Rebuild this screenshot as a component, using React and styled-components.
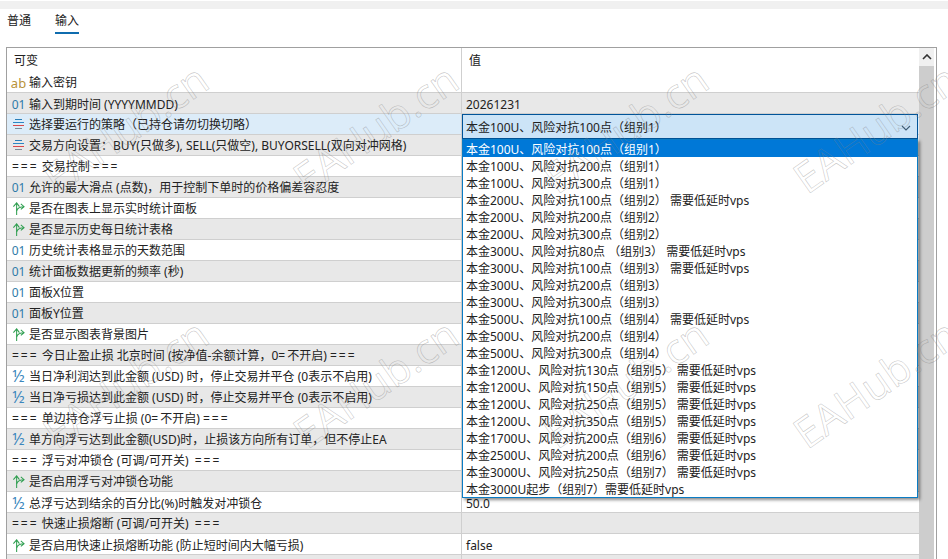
import React from "react";
import styled, { createGlobalStyle } from "styled-components";

const GlobalStyle = createGlobalStyle`
  html, body {
    margin: 0;
    padding: 0;
    height: 100%;
    overflow: hidden;
    background: #fff;
  }
  body {
    font-family: "Noto Sans", "Noto Sans CJK SC", sans-serif;
    font-size: 12px;
    color: #222;
  }
`;

const Page = styled.div`
  position: relative;
  width: 948px;
  height: 559px;
  overflow: hidden;
  background: #fff;
`;

const TopStrip = styled.div`
  height: 8px;
  margin-top: 1px;
  background: #f0f0f0;
`;

const Tabs = styled.div`
  display: flex;
  gap: 24px;
  height: 38px;
  padding: 0 0 0 7px;
  box-sizing: border-box;
`;

const Tab = styled.div`
  height: 21px;
  padding-top: 2px;
  line-height: 20px;
  border-bottom: 2px solid ${(p) => (p.$active ? "#0f6cae" : "transparent")};
`;

const Frame = styled.div`
  display: flex;
  width: 931px;
  height: 512px;
  margin-left: 6px;
  border: 1px solid #a0a0a0;
  border-bottom: 0;
  box-sizing: border-box;
`;

const Table = styled.div`
  flex: 1;
  min-width: 0;
`;

const Row = styled.div`
  display: grid;
  grid-template-columns: 455px 1fr;
  height: 21px;
  box-sizing: border-box;
  border-bottom: 1px solid #cfcfcf;
  background: ${(p) => (p.$selected ? "#dcecf9" : p.$shade ? "#e8e8e8" : "#fff")};
  line-height: 20px;
`;

const HeadRow = styled(Row)`
  height: 24px;
  border-bottom: 0;
  background: #fff;
  line-height: 25px;
`;

const NameCell = styled.div`
  display: flex;
  align-items: center;
  padding-left: ${(p) => (p.$head ? "7px" : "5px")};
  border-right: 1px solid #cfcfcf;
  white-space: pre;
  overflow: hidden;
`;

const NameText = styled.span`
  padding-top: 2px;
`;

const ValueCell = styled.div`
  position: relative;
  padding-left: ${(p) => (p.$head ? "7px" : "4px")};
  padding-top: ${(p) => (p.$head ? "0" : "2px")};
  white-space: nowrap;
`;

const Icon = styled.span`
  display: inline-flex;
  align-items: center;
  justify-content: center;
  flex: none;
  width: 13px;
  margin-right: 4px;
  padding-top: ${(p) => p.$shift || 0}px;
  font-size: ${(p) => p.$size || 12}px;
  color: ${(p) => p.$color};
`;

const Equals = styled.span`
  letter-spacing: 2px;
`;

const Combo = styled.div`
  position: absolute;
  top: 0;
  left: 0;
  right: 1px;
  height: 25px;
  display: flex;
  align-items: center;
  justify-content: space-between;
  padding: 2px 6px 0 3px;
  box-sizing: border-box;
  background: #cce4f7;
  border: 1px solid #005499;
`;

const List = styled.div`
  position: absolute;
  z-index: 2;
  top: 25px;
  left: 0;
  right: 1px;
  box-sizing: border-box;
  background: #fff;
  border: 1px solid #0a7cc4;
  box-shadow: 2px 2px 3px rgba(0, 0, 0, 0.45);
`;

const Option = styled.div`
  height: 17px;
  line-height: 19px;
  padding-left: 3px;
  color: ${(p) => (p.$active ? "#fff" : "#222")};
  background: ${(p) => (p.$active ? "#0078d7" : "transparent")};
`;

const Scrollbar = styled.div`
  flex: none;
  width: 17px;
  padding-right: 2px;
  box-sizing: border-box;
  display: flex;
  flex-direction: column;
  background: #fff;
`;

const ScrollButton = styled.div`
  height: 18px;
  display: flex;
  align-items: center;
  justify-content: center;
  background: #f0f0f0;
`;

const ScrollThumb = styled.div`
  flex: 1;
  background: #cdcdcd;
`;

const Watermarks = styled.div`
  position: absolute;
  z-index: 5;
  inset: 0;
  display: grid;
  grid-template-columns: repeat(4, 250px);
  grid-auto-rows: 255px;
  pointer-events: none;
`;

const Mark = styled.div`
  display: flex;
  align-items: center;
  justify-content: center;
  font-family: "Open Sans", sans-serif;
  font-size: 42px;
  color: transparent;
  -webkit-text-stroke: 0.6px rgba(130, 130, 130, 0.45);
  transform: rotate(-35deg);
  white-space: nowrap;
`;

const EnumIcon = () => (
  <svg width="13" height="12" viewBox="0 0 13 12" shapeRendering="crispEdges">
    <path d="M3 1.5h7" stroke="#2b7fb8" />
    <path d="M1 4.5h11" stroke="#2b86c5" />
    <path d="M1 7.5h11" stroke="#d8484a" />
    <path d="M3 10.5h7" stroke="#7d8a94" />
  </svg>
);

const BoolIcon = () => (
  <svg width="14" height="15" viewBox="0 0 14 15" fill="none" stroke="#2e9e4f" strokeWidth="1.1">
    <path d="M5 14.5V2M1.5 5.5L5 1.5l3 4" />
    <path d="M5 10c.8-3.5 3-4.5 8-4.5M9.5 2.5l3.5 3-3.5 3" />
  </svg>
);

const Chevron = ({ up }) => (
  <svg width="10" height="6" viewBox="0 0 10 6" fill="none" stroke={up ? "#333" : "#3d5a73"} strokeWidth={up ? 1.6 : 1.1}>
    <path d={up ? "M1 5l4-4 4 4" : "M1 1l4 4 4-4"} />
  </svg>
);

const icons = {
  ab: <Icon $color="#b8923a" $size={13} $shift={2}>ab</Icon>,
  num: <Icon $color="#2f7ba8" $shift={2}>01</Icon>,
  en: (
    <Icon>
      <EnumIcon />
    </Icon>
  ),
  bool: (
    <Icon>
      <BoolIcon />
    </Icon>
  ),
  half: <Icon $color="#3b86bd" $size={16}>½</Icon>,
};

const rows = [
  { icon: "ab", name: "输入密钥" },
  { icon: "num", name: "输入到期时间 (YYYYMMDD)", value: "20261231" },
  { icon: "en", name: "选择要运行的策略（已持仓请勿切换切略）", selected: true },
  { icon: "en", name: "交易方向设置：BUY(只做多), SELL(只做空), BUYORSELL(双向对冲网格)" },
  { name: "=== 交易控制 ===" },
  { icon: "num", name: "允许的最大滑点 (点数)，用于控制下单时的价格偏差容忍度" },
  { icon: "bool", name: "是否在图表上显示实时统计面板" },
  { icon: "bool", name: "是否显示历史每日统计表格" },
  { icon: "num", name: "历史统计表格显示的天数范围" },
  { icon: "num", name: "统计面板数据更新的频率 (秒)" },
  { icon: "num", name: "面板X位置" },
  { icon: "num", name: "面板Y位置" },
  { icon: "bool", name: "是否显示图表背景图片" },
  { name: "=== 今日止盈止损 北京时间 (按净值-余额计算，0=不开启) ===" },
  { icon: "half", name: "当日净利润达到此金额 (USD) 时，停止交易并平仓 (0表示不启用)" },
  { icon: "half", name: "当日净亏损达到此金额 (USD) 时，停止交易并平仓 (0表示不启用)" },
  { name: "=== 单边持仓浮亏止损 (0=不开启) ===" },
  { icon: "half", name: "单方向浮亏达到此金额(USD)时，止损该方向所有订单，但不停止EA" },
  { name: "=== 浮亏对冲锁仓 (可调/可开关)  ===" },
  { icon: "bool", name: "是否启用浮亏对冲锁仓功能" },
  { icon: "half", name: "总浮亏达到结余的百分比(%)时触发对冲锁仓", value: "50.0" },
  { name: "=== 快速止损熔断 (可调/可开关)  ===" },
  { icon: "bool", name: "是否启用快速止损熔断功能 (防止短时间内大幅亏损)", value: "false" },
  { name: "" },
];

const LOW = " 需要低延时vps";
const options = [
  "本金100U、风险对抗100点（组别1）",
  "本金100U、风险对抗200点（组别1）",
  "本金100U、风险对抗300点（组别1）",
  "本金200U、风险对抗100点（组别2）" + LOW,
  "本金200U、风险对抗200点（组别2）",
  "本金200U、风险对抗300点（组别2）",
  "本金300U、风险对抗80点 （组别3）" + LOW,
  "本金300U、风险对抗100点（组别3）" + LOW,
  "本金300U、风险对抗200点（组别3）",
  "本金300U、风险对抗300点（组别3）",
  "本金500U、风险对抗100点（组别4）" + LOW,
  "本金500U、风险对抗200点（组别4）",
  "本金500U、风险对抗300点（组别4）",
  "本金1200U、风险对抗130点（组别5）" + LOW,
  "本金1200U、风险对抗150点（组别5）" + LOW,
  "本金1200U、风险对抗250点（组别5）" + LOW,
  "本金1200U、风险对抗350点（组别5）" + LOW,
  "本金1700U、风险对抗200点（组别6）" + LOW,
  "本金2500U、风险对抗200点（组别6）" + LOW,
  "本金3000U、风险对抗250点（组别7）" + LOW,
  "本金3000U起步（组别7）需要低延时vps",
];

// the = signs are wider in the original font
const RowName = ({ text }) => (
  <NameText>
    {text.split(/(=+)/).map((part, i) => (part[0] === "=" ? <Equals key={i}>{part}</Equals> : part))}
  </NameText>
);

export default function App() {
  return (
    <Page>
      <GlobalStyle />
      <TopStrip />
      <Tabs>
        <Tab>普通</Tab>
        <Tab $active>输入</Tab>
      </Tabs>
      <Frame>
        <Table>
          <HeadRow>
            <NameCell $head>可变</NameCell>
            <ValueCell $head>值</ValueCell>
          </HeadRow>
          {rows.map((row, i) => (
            <Row key={i} $shade={i % 2 === 1} $selected={row.selected}>
              <NameCell>
                {row.icon && icons[row.icon]}
                <RowName text={row.name} />
              </NameCell>
              <ValueCell>
                {row.value}
                {row.selected && (
                  <>
                    <Combo>
                      {options[0]}
                      <Chevron />
                    </Combo>
                    <List>
                      {options.map((text, n) => (
                        <Option key={n} $active={n === 0}>
                          {text}
                        </Option>
                      ))}
                    </List>
                  </>
                )}
              </ValueCell>
            </Row>
          ))}
        </Table>
        <Scrollbar>
          <ScrollButton>
            <Chevron up />
          </ScrollButton>
          <ScrollThumb />
        </Scrollbar>
      </Frame>
      <Watermarks>
        {Array.from({ length: 8 }, (_, i) => (
          <Mark key={i}>EAHub.cn</Mark>
        ))}
      </Watermarks>
    </Page>
  );
}
